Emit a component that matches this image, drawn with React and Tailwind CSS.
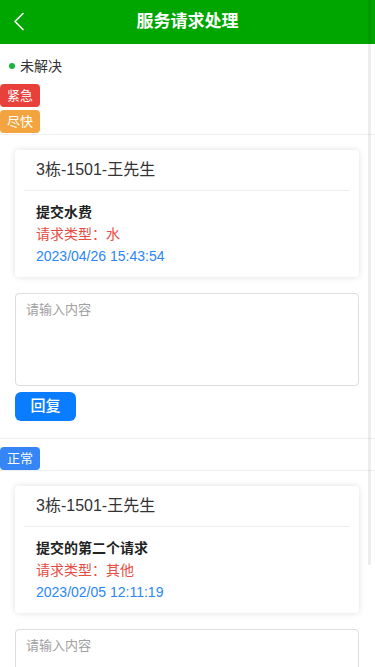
import React from 'react'

const requests = [
  {
    level: 'urgent',
    tags: [
      { label: '紧急', color: 'bg-[#e8403a]' },
      { label: '尽快', color: 'bg-[#f3a43e]' },
    ],
    room: '3栋-1501-王先生',
    title: '提交水费',
    type: '水',
    time: '2023/04/26 15:43:54',
  },
  {
    level: 'normal',
    tags: [{ label: '正常', color: 'bg-[#3585f7]' }],
    room: '3栋-1501-王先生',
    title: '提交的第二个请求',
    type: '其他',
    time: '2023/02/05 12:11:19',
  },
]

function Tag({ label, color }) {
  return (
    <div className={`w-[40px] h-[23px] rounded-[4px] ${color} text-white text-[13px] leading-[23px] text-center`}>
      {label}
    </div>
  )
}

function RequestBlock({ item, first }) {
  return (
    <div>
      <div className={`flex flex-col gap-[3px] border-b border-[#eeeeee] ${first ? 'pb-px' : 'pt-[8px] border-t'}`}>
        {item.tags.map((t) => (
          <Tag key={t.label} label={t.label} color={t.color} />
        ))}
      </div>

      <div className="pl-[15px] pr-[16px] pt-[15px] pb-[17px]">
        <div className="bg-white rounded-[4px] shadow-[0_0_6px_rgba(0,0,0,0.13)]">
          <div className="h-[40px] pl-[21px] flex items-center text-[16px] text-[#333333]">
            {item.room}
          </div>
          <div className="mx-[9px] border-t border-[#eeeeee]" />
          <div className="pl-[21px] pt-[10px] pb-[10px] text-[14px] leading-[22px]">
            <div className="font-bold text-[#222222]">{item.title}</div>
            <div className="text-[#ea4a3f]">请求类型：{item.type}</div>
            <div className="text-[#2a86f8]">{item.time}</div>
          </div>
        </div>

        <textarea
          placeholder="请输入内容"
          className="mt-[16px] block w-full h-[93px] resize-none rounded-[4px] border border-[#dddddd] px-[10px] py-[6px] text-[13px] text-[#333333] placeholder:text-[#a0a0a0] outline-none"
        />

        <button className="mt-[6px] w-[61px] h-[29px] rounded-[6px] bg-[#0a7cff] text-white text-[15px] font-medium">
          回复
        </button>
      </div>
    </div>
  )
}

export default function App() {
  return (
    <div
      className="relative h-[667px] overflow-hidden bg-white"
      style={{ fontFamily: '"Liberation Sans", "Noto Sans CJK SC", sans-serif' }}
    >
      <div className="relative h-[44px] bg-[#00a600] flex items-center justify-center">
        <svg
          className="absolute left-[13px] top-[12px]"
          width="12"
          height="19"
          viewBox="0 0 12 19"
          fill="none"
          stroke="white"
          strokeWidth="1.6"
          strokeLinecap="round"
          strokeLinejoin="round"
        >
          <path d="M10 1.5 L2 9.5 L10 17.5" />
        </svg>
        <h1 className="text-white text-[17px] font-bold">服务请求处理</h1>
      </div>

      <div className="mt-[12px] pl-[9px] flex items-center h-[20px] text-[14px] text-[#333333]">
        <span className="w-[6px] h-[6px] rounded-full bg-[#18b43c] mr-[5px]" />
        未解决
      </div>

      <div className="mt-[8px]">
        {requests.map((item, i) => (
          <RequestBlock key={i} item={item} first={i === 0} />
        ))}
      </div>

      <div className="absolute top-0 left-[368px] w-[3px] h-[565px] bg-[rgba(0,0,0,0.07)]" />
    </div>
  )
}
